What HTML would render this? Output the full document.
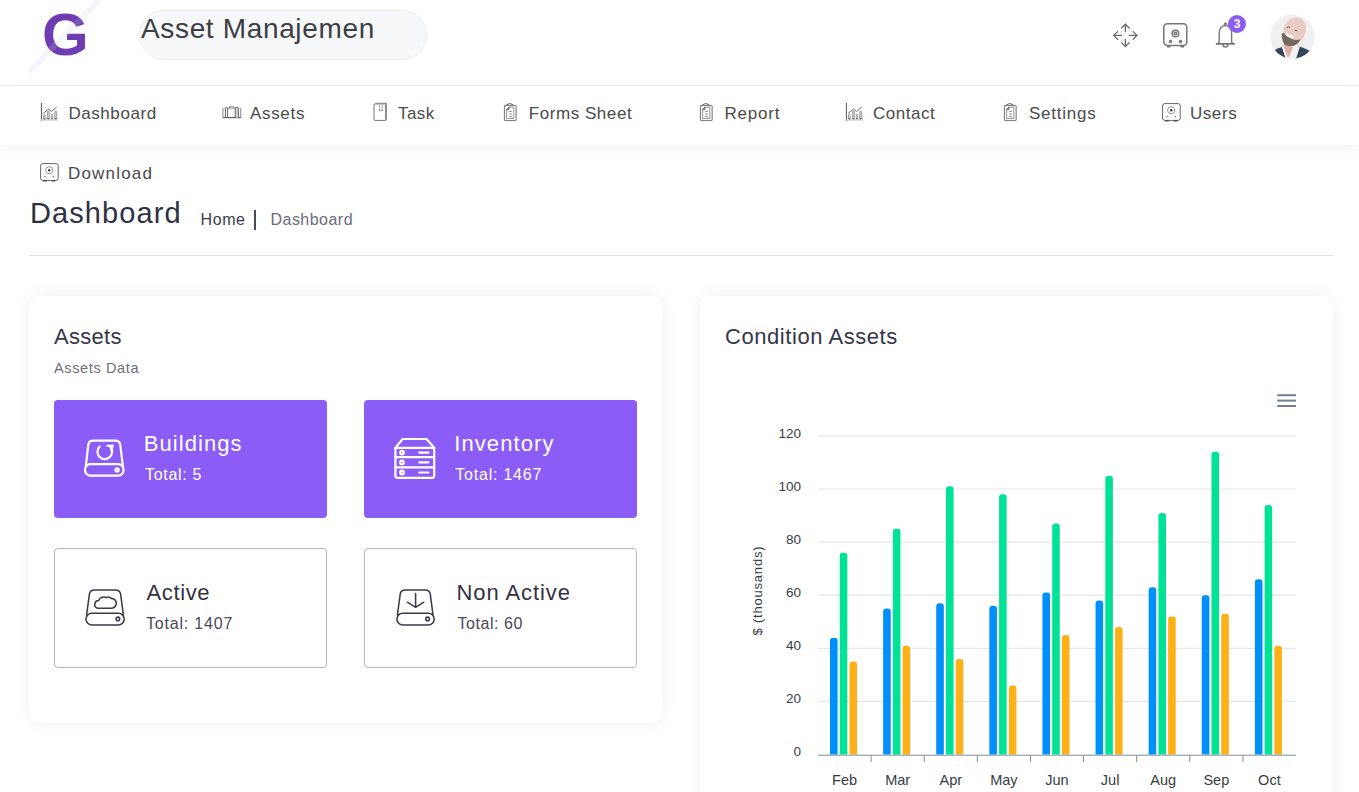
<!DOCTYPE html>
<html><head><meta charset="utf-8">
<style>
*{box-sizing:border-box;margin:0;padding:0}
html,body{width:1359px;height:792px;overflow:hidden;background:#fff;font-family:"Liberation Sans",sans-serif;color:#333}
.abs{position:absolute}
.t{position:absolute;white-space:nowrap;line-height:1}
#header{position:absolute;left:0;top:0;width:1359px;height:86px;background:#fff;border-bottom:1px solid #ebebeb}
#nav{position:absolute;left:0;top:86px;width:1359px;height:59px;background:#fff;box-shadow:0 6px 14px rgba(0,0,0,0.045)}
.nav{font-size:17px;color:#4a4a4a}
.ic{position:absolute;overflow:visible}
.card{position:absolute;background:#fff;border-radius:10px;box-shadow:0 0 18px rgba(0,0,0,0.065)}
.box{position:absolute;border-radius:4px}
.pur{background:#8b5cf6}
.wht{background:#fff;border:1px solid #b6b6b6}
</style></head><body>

<div id="header">
  <svg class="ic" style="left:0;top:0" width="130" height="85" viewBox="0 0 130 85">
    <line x1="29" y1="72" x2="99" y2="0" stroke="#f1f4fa" stroke-width="5.5"/>
  </svg>
  <div class="t" style="left:42px;top:2px;font-size:60px;font-weight:bold;color:#6e3db2;line-height:66px">G</div>
  <svg class="ic" style="left:0;top:0" width="130" height="85" viewBox="0 0 130 85">
    <line x1="29" y1="72" x2="99" y2="0" stroke="#ffffff" stroke-width="6" opacity="0.12"/>
  </svg>
  <div class="abs" style="left:139px;top:10px;width:288px;height:50px;border-radius:25px;background:#f7f8fa;border:1px solid #ececee"></div>
  <div class="t" style="left:141px;top:14px;font-size:28px;color:#3c3e44;line-height:30px;letter-spacing:0.65px">Asset Manajemen</div>
  <!-- move icon -->
  <svg class="ic" style="left:1110px;top:20px" width="30" height="30" viewBox="0 0 30 30" fill="none" stroke="#6a6b70" stroke-width="1.3" stroke-linecap="round" stroke-linejoin="round">
    <path d="M15.4 4.2V11.6M15.4 19.4V26.6M3.8 15.4H11.4M19.4 15.4H27"/>
    <path d="M11.6 8L15.4 4.2L19.2 8M11.6 22.8L15.4 26.6L19.2 22.8M7.6 11.6L3.8 15.4L7.6 19.2M23.2 11.6L27 15.4L23.2 19.2"/>
  </svg>
  <!-- safe icon -->
  <svg class="ic" style="left:1162px;top:22px" width="28" height="28" viewBox="0 0 28 28" fill="none" stroke="#76777c" stroke-width="1.5">
    <rect x="1.8" y="1.8" width="23" height="21.6" rx="3.5"/>
    <circle cx="13.4" cy="11.5" r="3.3"/><circle cx="13.4" cy="11.5" r="1.2"/>
    <circle cx="8.5" cy="19.5" r="1.05"/><circle cx="18.5" cy="19.5" r="1.05"/>
    <path d="M5 24.6h3.5M18.5 24.6h3.5" stroke-width="2"/>
  </svg>
  <!-- bell -->
  <svg class="ic" style="left:1210px;top:15px" width="30" height="35" viewBox="0 0 30 35" fill="none" stroke="#76777c" stroke-width="1.4" stroke-linejoin="round" stroke-linecap="round">
    <path d="M7.2 28.8Q9.2 28.6 9.2 26V19Q9.2 10.6 15.4 10.6Q21.6 10.6 21.6 19V26Q21.6 28.6 23.6 28.8"/>
    <path d="M6.6 28.8H24.2" stroke-width="1.7"/>
    <path d="M12.9 29.4A2.5 2.5 0 0 0 17.9 29.4"/>
    <circle cx="15.4" cy="9.4" r="1.1"/>
  </svg>
  <div class="abs" style="left:1228px;top:15px;width:18px;height:18px;border-radius:9px;background:#8c5cf3;color:#fff;font-weight:bold;font-size:12px;line-height:18px;text-align:center">3</div>
  <!-- avatar -->
  <svg class="ic" style="left:1269.5px;top:13.5px" width="45" height="45" viewBox="0 0 45 45">
    <defs><clipPath id="avc"><circle cx="22.5" cy="22.5" r="22.2"/></clipPath></defs>
    <circle cx="22.5" cy="22.5" r="22.2" fill="#f0f0f1"/>
    <g clip-path="url(#avc)">
      <path d="M2 38 Q7 34 12 33 L16 45 H2Z" fill="#34445d"/>
      <path d="M28 32 Q35 34 40 37 L44 45 H25Z" fill="#34445d"/>
      <path d="M12 33 L16 45 H26 L30 32 Q22 35 12 33Z" fill="#f3f3f3"/>
      <path d="M13 30 Q15 38 18 44 Q21 40 23 33 Q18 33 13 30Z" fill="#d9b3a6"/>
      <ellipse cx="24.6" cy="16.8" rx="11" ry="13.8" fill="#e8cdc2" transform="rotate(24 24.6 16.8)"/>
      <path d="M11.6 19.5 Q11.8 28 15 31 Q20 33.5 25.5 31 Q29 29 30.6 25.2 Q26.5 26.8 22.5 25.2 Q17 23 14.6 19Z" fill="#76685f"/>
      <path d="M14.8 19.8 Q18 24.6 23.6 24.2 Q24.2 22.4 22.4 21.6 Q18.5 21.6 15.6 18.8Z" fill="#ffffff"/>
      <path d="M16.6 13.6 Q18.4 12.6 20 13.4M24.6 16.6 Q26.2 16 27.6 17" stroke="#6a5048" stroke-width="0.9" fill="none"/>
    </g>
  </svg>
</div>

<div id="nav"></div>
<svg class="ic" style="left:40px;top:103px" width="20" height="20" viewBox="0 0 20 20" fill="none">
    <path d="M1.45 0V17.9" stroke="#666" stroke-width="1.1"/>
    <path d="M1.2 16.9H18.1" stroke="#cfcfcf" stroke-width="1.5"/>
    <rect x="3.5" y="11.4" width="1.7" height="4.6" rx="0.8" fill="#dcdcdc" stroke="#888" stroke-width="0.7"/>
    <rect x="7.4" y="8.1" width="1.9" height="7.9" rx="0.9" fill="#d0d0d0" stroke="#888" stroke-width="0.7"/>
    <rect x="11.2" y="11.3" width="1.6" height="4.7" rx="0.8" fill="#dcdcdc" stroke="#888" stroke-width="0.7"/>
    <rect x="14.7" y="8" width="2" height="8" rx="0.9" fill="#d0d0d0" stroke="#888" stroke-width="0.7"/>
    <path d="M3.5 15.6H5.2M7.4 15.6H9.3M11.2 15.6H12.8M14.7 15.6H16.7" stroke="#555" stroke-width="0.9"/>
    <path d="M3.1 10.3L8.4 6.2L11.5 8.5L16.6 4.1" stroke="#5a5a5a" stroke-width="0.9"/>
  </svg>
<div class="t nav" style="left:68.4px;top:105px;letter-spacing:0.57px">Dashboard</div>
<svg class="ic" style="left:219px;top:100px" width="26" height="24" viewBox="0 0 26 24" fill="none" stroke="#666" stroke-width="0.9">
    <path d="M3.9 8.2V17.6M21.8 8.2V17.6" stroke="#777"/>
    <path d="M3.9 17.6H21.8" stroke="#555" stroke-width="1.1"/>
    <rect x="16.2" y="7.6" width="3.2" height="10" fill="#d4d4d4" stroke="none"/>
    <path d="M6.4 17.6V8Q6.4 7.4 7.5 7.4Q8.6 7.4 8.6 8V17.6M16.2 17.6V8Q16.2 7.4 17.8 7.4Q19.4 7.4 19.4 8V17.6" stroke="#555"/>
    <path d="M3.9 8.2H6.4M19.4 8.2H21.8" stroke="#aaa" stroke-width="0.7"/>
    <path d="M8.6 8.6H16.2" stroke="#999" stroke-width="0.8"/>
    <path d="M10.4 8.4V6.8H15V8.4" stroke="#666" stroke-width="0.9"/>
  </svg>
<div class="t nav" style="left:249.9px;top:105px;letter-spacing:0.7px">Assets</div>
<svg class="ic" style="left:370px;top:100px" width="22" height="24" viewBox="0 0 22 24" fill="none" stroke="#666" stroke-width="0.9">
    <path d="M5.6 3.3H16.3V19.4Q16.3 20.4 15.3 20.4H5Q4 20.4 4 19.4V5Q4 4 5.6 3.3Z"/>
    <path d="M15.5 4.6V19.6" stroke="#8a8a8a" stroke-width="1.1"/>
    <path d="M5.4 4.6H15.2" stroke="#b0b0b0" stroke-width="0.8"/>
    <path d="M9.6 4.6V10.2M12.2 4.6V10.2" stroke="#999" stroke-width="0.8"/>
    <circle cx="9.9" cy="10.4" r="0.6" fill="#444" stroke="none"/><circle cx="12" cy="10.4" r="0.6" fill="#444" stroke="none"/>
  </svg>
<div class="t nav" style="left:398px;top:105px;letter-spacing:0.43px">Task</div>
<svg class="ic" style="left:503px;top:100px" width="16" height="24" viewBox="0 0 16 24" fill="none" stroke="#666" stroke-width="0.9">
    <rect x="1.4" y="5.4" width="11.8" height="15.2" rx="0.6"/>
    <path d="M3.2 5.4Q3.6 4.2 5.4 4.1Q6.4 2.8 8.2 4.1Q10 4.2 10.6 5.4" stroke="#555" stroke-width="1"/>
    <path d="M6 7.1H10.8V18.5H3.6V9.6Z" fill="#fff" stroke="#777" stroke-width="0.8"/>
    <path d="M3.6 9.6L6 7.1V9.6Z" fill="#ccc" stroke="#555" stroke-width="0.8"/>
    <path d="M6.2 11.4H8.8M6.2 13.9H8.8M6.2 16.4H8.8" stroke="#777" stroke-width="0.9"/>
    <path d="M13.2 6.5V20.2" stroke="#aaa" stroke-width="0.8"/>
  </svg>
<div class="t nav" style="left:528.8px;top:105px;letter-spacing:0.55px">Forms Sheet</div>
<svg class="ic" style="left:698.8px;top:100px" width="16" height="24" viewBox="0 0 16 24" fill="none" stroke="#666" stroke-width="0.9">
    <rect x="1.4" y="5.4" width="11.8" height="15.2" rx="0.6"/>
    <path d="M3.2 5.4Q3.6 4.2 5.4 4.1Q6.4 2.8 8.2 4.1Q10 4.2 10.6 5.4" stroke="#555" stroke-width="1"/>
    <path d="M6 7.1H10.8V18.5H3.6V9.6Z" fill="#fff" stroke="#777" stroke-width="0.8"/>
    <path d="M3.6 9.6L6 7.1V9.6Z" fill="#ccc" stroke="#555" stroke-width="0.8"/>
    <path d="M6.2 11.4H8.8M6.2 13.9H8.8M6.2 16.4H8.8" stroke="#777" stroke-width="0.9"/>
    <path d="M13.2 6.5V20.2" stroke="#aaa" stroke-width="0.8"/>
  </svg>
<div class="t nav" style="left:724.4px;top:105px;letter-spacing:0.8px">Report</div>
<svg class="ic" style="left:845px;top:103px" width="20" height="20" viewBox="0 0 20 20" fill="none">
    <path d="M1.45 0V17.9" stroke="#666" stroke-width="1.1"/>
    <path d="M1.2 16.9H18.1" stroke="#cfcfcf" stroke-width="1.5"/>
    <rect x="3.5" y="11.4" width="1.7" height="4.6" rx="0.8" fill="#dcdcdc" stroke="#888" stroke-width="0.7"/>
    <rect x="7.4" y="8.1" width="1.9" height="7.9" rx="0.9" fill="#d0d0d0" stroke="#888" stroke-width="0.7"/>
    <rect x="11.2" y="11.3" width="1.6" height="4.7" rx="0.8" fill="#dcdcdc" stroke="#888" stroke-width="0.7"/>
    <rect x="14.7" y="8" width="2" height="8" rx="0.9" fill="#d0d0d0" stroke="#888" stroke-width="0.7"/>
    <path d="M3.5 15.6H5.2M7.4 15.6H9.3M11.2 15.6H12.8M14.7 15.6H16.7" stroke="#555" stroke-width="0.9"/>
    <path d="M3.1 10.3L8.4 6.2L11.5 8.5L16.6 4.1" stroke="#5a5a5a" stroke-width="0.9"/>
  </svg>
<div class="t nav" style="left:873px;top:105px;letter-spacing:0.53px">Contact</div>
<svg class="ic" style="left:1003px;top:100px" width="16" height="24" viewBox="0 0 16 24" fill="none" stroke="#666" stroke-width="0.9">
    <rect x="1.4" y="5.4" width="11.8" height="15.2" rx="0.6"/>
    <path d="M3.2 5.4Q3.6 4.2 5.4 4.1Q6.4 2.8 8.2 4.1Q10 4.2 10.6 5.4" stroke="#555" stroke-width="1"/>
    <path d="M6 7.1H10.8V18.5H3.6V9.6Z" fill="#fff" stroke="#777" stroke-width="0.8"/>
    <path d="M3.6 9.6L6 7.1V9.6Z" fill="#ccc" stroke="#555" stroke-width="0.8"/>
    <path d="M6.2 11.4H8.8M6.2 13.9H8.8M6.2 16.4H8.8" stroke="#777" stroke-width="0.9"/>
    <path d="M13.2 6.5V20.2" stroke="#aaa" stroke-width="0.8"/>
  </svg>
<div class="t nav" style="left:1029px;top:105px;letter-spacing:0.77px">Settings</div>
<svg class="ic" style="left:1162px;top:102.8px" width="20" height="20" viewBox="0 0 20 20" fill="none" stroke="#555" stroke-width="0.9">
    <rect x="0.6" y="0.6" width="17.6" height="16.8" rx="2.2"/>
    <circle cx="9.2" cy="7.2" r="3.6" stroke="#888"/>
    <circle cx="9.2" cy="7.2" r="1.2" fill="#333" stroke="none"/>
    <circle cx="5" cy="13.6" r="0.8" fill="#777" stroke="none"/><circle cx="13.4" cy="13.6" r="0.8" fill="#777" stroke="none"/>
    <path d="M3 17.9H6.8M11.6 17.9H15.4" stroke="#444" stroke-width="1.2"/>
  </svg>
<div class="t nav" style="left:1189.9px;top:105px;letter-spacing:0.6px">Users</div>
<svg class="ic" style="left:40px;top:162.8px" width="20" height="20" viewBox="0 0 20 20" fill="none" stroke="#555" stroke-width="0.9">
    <rect x="0.6" y="0.6" width="17.6" height="16.8" rx="2.2"/>
    <circle cx="9.2" cy="7.2" r="3.6" stroke="#888"/>
    <circle cx="9.2" cy="7.2" r="1.2" fill="#333" stroke="none"/>
    <circle cx="5" cy="13.6" r="0.8" fill="#777" stroke="none"/><circle cx="13.4" cy="13.6" r="0.8" fill="#777" stroke="none"/>
    <path d="M3 17.9H6.8M11.6 17.9H15.4" stroke="#444" stroke-width="1.2"/>
  </svg>
<div class="t nav" style="left:68px;top:165px;letter-spacing:1.19px">Download</div>


<!-- page title -->
<div class="t" style="left:30px;top:199px;font-size:29px;color:#2d3144;letter-spacing:1.1px">Dashboard</div>
<div class="t" style="left:200.5px;top:212px;font-size:16px;color:#3b3d4c;letter-spacing:0.6px">Home</div>
<div class="abs" style="left:254px;top:210px;width:2px;height:19.5px;background:#4a4a5a"></div>
<div class="t" style="left:270.5px;top:212px;font-size:16px;color:#6c6b80;letter-spacing:0.47px">Dashboard</div>
<div class="abs" style="left:29px;top:255px;width:1304px;height:1px;background:#e2e2e2"></div>

<!-- card 1 -->
<div class="card" style="left:29px;top:296px;width:633px;height:427px"></div>
<div class="t" style="left:54px;top:325.5px;font-size:22px;color:#35364a;letter-spacing:0.3px">Assets</div>
<div class="t" style="left:54px;top:360.5px;font-size:14.5px;color:#6c6e7c;letter-spacing:0.63px">Assets Data</div>
<div class="box pur" style="left:54px;top:400px;width:273px;height:118px"></div>
<div class="box pur" style="left:364px;top:400px;width:273px;height:118px"></div>
<div class="box wht" style="left:54px;top:548px;width:273px;height:120px"></div>
<div class="box wht" style="left:364px;top:548px;width:273px;height:120px"></div>

<!-- box icons -->
<svg class="ic" style="left:80px;top:435px" width="50" height="47" viewBox="0 0 50 47" fill="none" stroke="#fff" stroke-width="2.2" stroke-linecap="round" stroke-linejoin="round">
  <path d="M5.8 31L8.3 10Q8.8 5.6 13.2 5.6H35.4Q39.8 5.6 40.3 10L42.8 31"/>
  <rect x="5" y="29.2" width="38.6" height="11.4" rx="5.5"/>
  <circle cx="37.1" cy="35" r="1.6"/>
  <path d="M19.6 11.6A7.3 7.3 0 1 0 30.6 12.4"/>
  <path d="M27.4 10.8L32.6 10.6L31.6 15.2"/>
</svg>
<svg class="ic" style="left:390px;top:433px" width="50" height="50" viewBox="0 0 50 50" fill="none" stroke="#fff" stroke-width="2.2" stroke-linecap="round" stroke-linejoin="round">
  <path d="M5.4 14.8L12.6 6H36.6L44.2 14.8"/>
  <path d="M5.4 14.8H44.2V42.8Q44.2 44.8 42.2 44.8H7.4Q5.4 44.8 5.4 42.8Z"/>
  <path d="M5.4 24.2H44.2M5.4 34.4H44.2"/>
  <circle cx="12" cy="19.6" r="1.8"/><circle cx="12" cy="29.4" r="1.8"/><circle cx="12" cy="39.5" r="1.8"/>
  <path d="M29.2 19.6H38.4M29.2 29.4H38.4M29.2 39.5H38.4" stroke-width="2.2"/>
</svg>
<svg class="ic" style="left:80px;top:582px" width="50" height="50" viewBox="0 0 50 50" fill="none" stroke="#3d3a4b" stroke-width="1.55" stroke-linecap="round" stroke-linejoin="round">
  <path d="M6.6 33L9.4 12.2Q9.9 7.9 14.5 7.9H35.4Q40 7.9 40.6 12.2L43.4 33"/>
  <rect x="6" y="31.2" width="38.2" height="11.7" rx="5.8"/>
  <circle cx="37.9" cy="36.9" r="1.8"/>
  <path d="M17.4 26.2H31.6A4.9 4.9 0 0 0 31.2 16.4A3.5 3.5 0 0 0 26.8 15.6A6 6 0 0 0 18.6 18.6A3.9 3.9 0 0 0 17.4 26.2Z"/>
</svg>
<svg class="ic" style="left:390px;top:582px" width="50" height="50" viewBox="0 0 50 50" fill="none" stroke="#3d3a4b" stroke-width="1.55" stroke-linecap="round" stroke-linejoin="round">
  <path d="M7.4 33L10.2 12.2Q10.7 7.9 15.3 7.9H35.2Q39.8 7.9 40.3 12.2L43 33"/>
  <rect x="6.9" y="31.2" width="37.3" height="11.7" rx="5.8"/>
  <circle cx="37.6" cy="36.9" r="1.8"/>
  <path d="M25.6 11.4V25.3M17.4 20.2L25.6 25.3L33.8 20.2"/>
</svg>
<!-- box texts -->
<div class="t" style="left:143.8px;top:432.5px;font-size:22px;color:#fff;letter-spacing:1.06px">Buildings</div>
<div class="t" style="left:145px;top:466.7px;font-size:16px;color:#fff;letter-spacing:0.69px">Total: 5</div>
<div class="t" style="left:454.2px;top:432.5px;font-size:22px;color:#fff;letter-spacing:1.09px">Inventory</div>
<div class="t" style="left:455.3px;top:466.7px;font-size:16px;color:#fff;letter-spacing:0.78px">Total: 1467</div>
<div class="t" style="left:146.4px;top:581.5px;font-size:22px;color:#343244;letter-spacing:0.66px">Active</div>
<div class="t" style="left:146px;top:616px;font-size:16px;color:#4a4858;letter-spacing:0.8px">Total: 1407</div>
<div class="t" style="left:456.5px;top:581.5px;font-size:22px;color:#343244;letter-spacing:0.92px">Non Active</div>
<div class="t" style="left:457.5px;top:616px;font-size:16px;color:#4a4858;letter-spacing:0.56px">Total: 60</div>

<!-- card 2 -->
<div class="card" style="left:700px;top:296px;width:633px;height:520px"></div>
<div class="t" style="left:725px;top:325.5px;font-size:22px;color:#35364a;letter-spacing:0.56px">Condition Assets</div>
<svg class="abs" style="left:0;top:0" width="1359" height="792" viewBox="0 0 1359 792">
<line x1="818" y1="435.9" x2="1296" y2="435.9" stroke="#e6e6e6" stroke-width="1.2"/>
<line x1="818" y1="489.0" x2="1296" y2="489.0" stroke="#e6e6e6" stroke-width="1.2"/>
<line x1="818" y1="542.1" x2="1296" y2="542.1" stroke="#e6e6e6" stroke-width="1.2"/>
<line x1="818" y1="595.2" x2="1296" y2="595.2" stroke="#e6e6e6" stroke-width="1.2"/>
<line x1="818" y1="648.3" x2="1296" y2="648.3" stroke="#e6e6e6" stroke-width="1.2"/>
<line x1="818" y1="701.4" x2="1296" y2="701.4" stroke="#e6e6e6" stroke-width="1.2"/>
<path d="M830.00 754.5V640.68Q830.00 637.68 833.00 637.68H834.60Q837.60 637.68 837.60 640.68V754.5Z" fill="#008ffb"/>
<path d="M839.74 754.5V555.72Q839.74 552.72 842.74 552.72H844.34Q847.34 552.72 847.34 555.72V754.5Z" fill="#00e396"/>
<path d="M849.48 754.5V664.58Q849.48 661.58 852.48 661.58H854.08Q857.08 661.58 857.08 664.58V754.5Z" fill="#feb019"/>
<path d="M883.11 754.5V611.48Q883.11 608.48 886.11 608.48H887.71Q890.71 608.48 890.71 611.48V754.5Z" fill="#008ffb"/>
<path d="M892.85 754.5V531.83Q892.85 528.83 895.85 528.83H897.45Q900.45 528.83 900.45 531.83V754.5Z" fill="#00e396"/>
<path d="M902.59 754.5V648.64Q902.59 645.64 905.59 645.64H907.19Q910.19 645.64 910.19 648.64V754.5Z" fill="#feb019"/>
<path d="M936.22 754.5V606.16Q936.22 603.16 939.22 603.16H940.82Q943.82 603.16 943.82 606.16V754.5Z" fill="#008ffb"/>
<path d="M945.96 754.5V489.35Q945.96 486.35 948.96 486.35H950.56Q953.56 486.35 953.56 489.35V754.5Z" fill="#00e396"/>
<path d="M955.70 754.5V661.92Q955.70 658.92 958.70 658.92H960.30Q963.30 658.92 963.30 661.92V754.5Z" fill="#feb019"/>
<path d="M989.33 754.5V608.82Q989.33 605.82 992.33 605.82H993.93Q996.93 605.82 996.93 608.82V754.5Z" fill="#008ffb"/>
<path d="M999.07 754.5V497.31Q999.07 494.31 1002.07 494.31H1003.67Q1006.67 494.31 1006.67 497.31V754.5Z" fill="#00e396"/>
<path d="M1008.81 754.5V688.47Q1008.81 685.47 1011.81 685.47H1013.41Q1016.41 685.47 1016.41 688.47V754.5Z" fill="#feb019"/>
<path d="M1042.44 754.5V595.55Q1042.44 592.55 1045.44 592.55H1047.04Q1050.04 592.55 1050.04 595.55V754.5Z" fill="#008ffb"/>
<path d="M1052.18 754.5V526.51Q1052.18 523.51 1055.18 523.51H1056.78Q1059.78 523.51 1059.78 526.51V754.5Z" fill="#00e396"/>
<path d="M1061.92 754.5V638.02Q1061.92 635.02 1064.92 635.02H1066.52Q1069.52 635.02 1069.52 638.02V754.5Z" fill="#feb019"/>
<path d="M1095.55 754.5V603.51Q1095.55 600.51 1098.55 600.51H1100.15Q1103.15 600.51 1103.15 603.51V754.5Z" fill="#008ffb"/>
<path d="M1105.29 754.5V478.73Q1105.29 475.73 1108.29 475.73H1109.89Q1112.89 475.73 1112.89 478.73V754.5Z" fill="#00e396"/>
<path d="M1115.03 754.5V630.06Q1115.03 627.06 1118.03 627.06H1119.63Q1122.63 627.06 1122.63 630.06V754.5Z" fill="#feb019"/>
<path d="M1148.66 754.5V590.24Q1148.66 587.24 1151.66 587.24H1153.26Q1156.26 587.24 1156.26 590.24V754.5Z" fill="#008ffb"/>
<path d="M1158.40 754.5V515.89Q1158.40 512.89 1161.40 512.89H1163.00Q1166.00 512.89 1166.00 515.89V754.5Z" fill="#00e396"/>
<path d="M1168.14 754.5V619.44Q1168.14 616.44 1171.14 616.44H1172.74Q1175.74 616.44 1175.74 619.44V754.5Z" fill="#feb019"/>
<path d="M1201.77 754.5V598.20Q1201.77 595.20 1204.77 595.20H1206.37Q1209.37 595.20 1209.37 598.20V754.5Z" fill="#008ffb"/>
<path d="M1211.51 754.5V454.83Q1211.51 451.83 1214.51 451.83H1216.11Q1219.11 451.83 1219.11 454.83V754.5Z" fill="#00e396"/>
<path d="M1221.25 754.5V616.78Q1221.25 613.78 1224.25 613.78H1225.85Q1228.85 613.78 1228.85 616.78V754.5Z" fill="#feb019"/>
<path d="M1254.88 754.5V582.27Q1254.88 579.27 1257.88 579.27H1259.48Q1262.48 579.27 1262.48 582.27V754.5Z" fill="#008ffb"/>
<path d="M1264.62 754.5V507.93Q1264.62 504.93 1267.62 504.93H1269.22Q1272.22 504.93 1272.22 507.93V754.5Z" fill="#00e396"/>
<path d="M1274.36 754.5V648.64Q1274.36 645.64 1277.36 645.64H1278.96Q1281.96 645.64 1281.96 648.64V754.5Z" fill="#feb019"/>
<line x1="818" y1="755.2" x2="1296" y2="755.2" stroke="#78909c" stroke-width="1"/>
<line x1="871.1" y1="755.5" x2="871.1" y2="762" stroke="#78909c" stroke-width="1"/>
<line x1="924.2" y1="755.5" x2="924.2" y2="762" stroke="#78909c" stroke-width="1"/>
<line x1="977.3" y1="755.5" x2="977.3" y2="762" stroke="#78909c" stroke-width="1"/>
<line x1="1030.4" y1="755.5" x2="1030.4" y2="762" stroke="#78909c" stroke-width="1"/>
<line x1="1083.5" y1="755.5" x2="1083.5" y2="762" stroke="#78909c" stroke-width="1"/>
<line x1="1136.7" y1="755.5" x2="1136.7" y2="762" stroke="#78909c" stroke-width="1"/>
<line x1="1189.8" y1="755.5" x2="1189.8" y2="762" stroke="#78909c" stroke-width="1"/>
<line x1="1242.9" y1="755.5" x2="1242.9" y2="762" stroke="#78909c" stroke-width="1"/>
<text x="801" y="437.5" text-anchor="end" font-family="Liberation Sans" font-size="13.5" fill="#373d3f">120</text>
<text x="801" y="490.6" text-anchor="end" font-family="Liberation Sans" font-size="13.5" fill="#373d3f">100</text>
<text x="801" y="543.7" text-anchor="end" font-family="Liberation Sans" font-size="13.5" fill="#373d3f">80</text>
<text x="801" y="596.8" text-anchor="end" font-family="Liberation Sans" font-size="13.5" fill="#373d3f">60</text>
<text x="801" y="649.9" text-anchor="end" font-family="Liberation Sans" font-size="13.5" fill="#373d3f">40</text>
<text x="801" y="703.0" text-anchor="end" font-family="Liberation Sans" font-size="13.5" fill="#373d3f">20</text>
<text x="801" y="756.1" text-anchor="end" font-family="Liberation Sans" font-size="13.5" fill="#373d3f">0</text>
<text x="844.6" y="784.8" text-anchor="middle" font-family="Liberation Sans" font-size="14.5" fill="#373d3f">Feb</text>
<text x="897.7" y="784.8" text-anchor="middle" font-family="Liberation Sans" font-size="14.5" fill="#373d3f">Mar</text>
<text x="950.8" y="784.8" text-anchor="middle" font-family="Liberation Sans" font-size="14.5" fill="#373d3f">Apr</text>
<text x="1003.9" y="784.8" text-anchor="middle" font-family="Liberation Sans" font-size="14.5" fill="#373d3f">May</text>
<text x="1057.0" y="784.8" text-anchor="middle" font-family="Liberation Sans" font-size="14.5" fill="#373d3f">Jun</text>
<text x="1110.1" y="784.8" text-anchor="middle" font-family="Liberation Sans" font-size="14.5" fill="#373d3f">Jul</text>
<text x="1163.2" y="784.8" text-anchor="middle" font-family="Liberation Sans" font-size="14.5" fill="#373d3f">Aug</text>
<text x="1216.3" y="784.8" text-anchor="middle" font-family="Liberation Sans" font-size="14.5" fill="#373d3f">Sep</text>
<text x="1269.4" y="784.8" text-anchor="middle" font-family="Liberation Sans" font-size="14.5" fill="#373d3f">Oct</text>
<text x="0" y="0" transform="translate(761.5 590.6) rotate(-90)" text-anchor="middle" font-family="Liberation Sans" font-size="13" letter-spacing="0.8" fill="#373d3f">$ (thousands)</text>
<line x1="1277.2" y1="395.2" x2="1296" y2="395.2" stroke="#6e8192" stroke-width="2"/>
<line x1="1277.2" y1="400.6" x2="1296" y2="400.6" stroke="#6e8192" stroke-width="2"/>
<line x1="1277.2" y1="406" x2="1296" y2="406" stroke="#6e8192" stroke-width="2"/>
</svg>
</body></html>
